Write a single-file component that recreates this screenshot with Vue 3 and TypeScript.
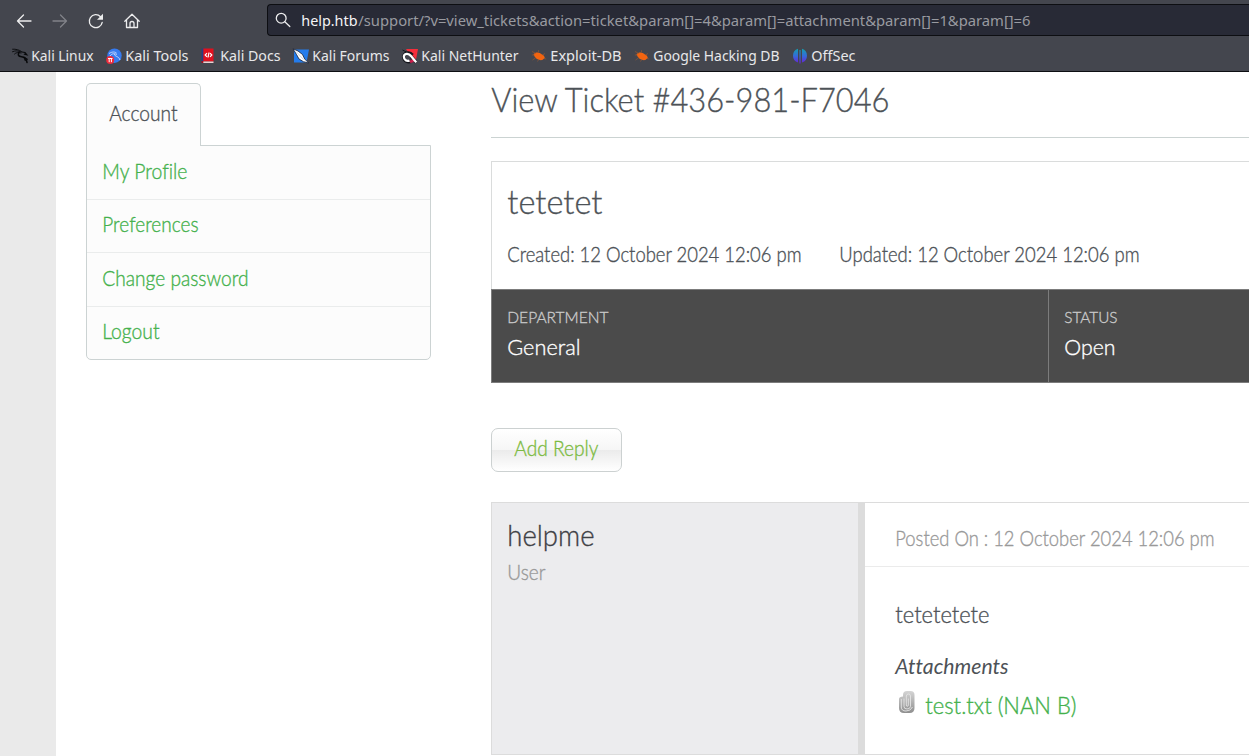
<script setup lang="ts">
import { h, type FunctionalComponent } from 'vue'

interface FitProps {
  text: string
  width: number
  size: number
}

// One line of text set to a fixed measure; its baseline sits `size` below the top.
const Fit: FunctionalComponent<FitProps> = (props) =>
  h('svg', { width: props.width, height: Math.round(props.size * 1.3) }, [
    h(
      'text',
      {
        x: 0.3,
        y: props.size,
        'font-size': props.size,
        fill: 'currentColor',
        textLength: props.width - 0.8,
        lengthAdjust: 'spacingAndGlyphs',
      },
      props.text,
    ),
  ])
Fit.props = ['text', 'width', 'size']

const bookmarks = [
  { icon: 'linux', label: 'Kali Linux', width: 63, cell: 94 },
  { icon: 'tools', label: 'Kali Tools', width: 64, cell: 95 },
  { icon: 'docs', label: 'Kali Docs', width: 61, cell: 92 },
  { icon: 'forums', label: 'Kali Forums', width: 78, cell: 109 },
  { icon: 'hunter', label: 'Kali NetHunter', width: 98, cell: 129 },
  { icon: 'bug', label: 'Exploit-DB', width: 72, cell: 103 },
  { icon: 'bug', label: 'Google Hacking DB', width: 127, cell: 158 },
  { icon: 'offsec', label: 'OffSec', width: 45, cell: 70 },
]

const menu = [
  { label: 'My Profile', width: 86 },
  { label: 'Preferences', width: 97 },
  { label: 'Change password', width: 147 },
  { label: 'Logout', width: 58 },
]
</script>

<template>
  <div class="window">
    <header class="chrome">
      <div class="toolbar">
        <nav class="nav">
          <svg width="16" height="16" viewBox="0 0 16 16"><path d="M15 8H1.500M7.500 2L1.500 8l6 6" /></svg>
          <svg class="dim" width="16" height="16" viewBox="0 0 16 16"><path d="M1 8h13.500M8.500 2l6 6-6 6" /></svg>
          <svg width="16" height="16" viewBox="0 0 16 16">
            <path d="M14.200 9.300A6.500 6.500 0 1 1 12.500 3.700" />
            <path class="solid" d="M15 .8v6H9z" />
          </svg>
          <svg width="16" height="16" viewBox="0 0 16 16">
            <path d="M.8 8.300L8 1.200l7.200 7.100M2.500 7v7.500h11V7M6 14.500v-4a2 2 0 0 1 4 0v4" />
          </svg>
        </nav>
        <div class="urlbar">
          <svg class="lens" width="16" height="16" viewBox="0 0 16 16"><circle cx="6.200" cy="6.200" r="4.900" /><path d="M9.800 9.800l5 4.700" /></svg>
          <Fit class="host" text="help.htb" :width="57" :size="15" />
          <Fit class="path" text="/support/?v=view_tickets&amp;action=ticket&amp;param[]=4&amp;param[]=attachment&amp;param[]=1&amp;param[]=6" :width="673" :size="15" />
        </div>
      </div>
      <div class="bookmarks">
        <div v-for="b in bookmarks" :key="b.label" class="bookmark" :style="{ width: b.cell + 'px' }">
          <svg class="favicon" width="16" height="16" viewBox="0 0 16 16">
            <g v-if="b.icon === 'linux'" fill="none" stroke="#08090b" stroke-linecap="round">
              <path d="M.6 1.200C4 1 7 1.800 9.500 3.500M.5 3.700C4 2.300 6 2.700 9 4M2.500 6C4 4.300 7 4 9 5" stroke-width=".9" />
              <path d="M7 4.500C5.500 7 6.500 8.500 9.500 8.700c3.500.2 5 1.800 5.500 5.800" stroke-width="1.600" />
              <path d="M10 4l3 .5 1.800 2.300-2.500-.7M12 9.300l3.300 2M12.500 10.500l.8 2" stroke-width="1.200" />
            </g>
            <g v-else-if="b.icon === 'tools'">
              <circle cx="8.500" cy="7.700" r="7.200" fill="#367bf0" />
              <path d="M3 5.500c4-2.300 6-1.500 7.500-.5M4 8c2-3 5-2.500 7-1.500M8.500 6c0 3 4 1.500 5.500 6" fill="none" stroke="#dfeaff" stroke-width=".8" />
              <circle cx="4.200" cy="12" r="4" fill="#ed2b3b" />
              <path d="M2 10.500h4.500M3.200 10.500v3.700M5.400 10.500v3.700" stroke="#fff" fill="none" />
            </g>
            <g v-else-if="b.icon === 'docs'">
              <path d="M.5.5h2.800v13H.5z" fill="#263e83" />
              <path d="M2.300.5h10.200v13H2.300z" fill="#e0101e" />
              <path d="M1.500 13.500h11V15h-11z" fill="#e9d3d3" /><path d="M.5 13h1.800v2H.5z" fill="#a00d1d" />
              <path d="M6 5.200L4.200 7 6 8.800M9 5.200L10.800 7 9 8.800M8 4.500L7 9.500" fill="none" stroke="#fff" stroke-width="1.200" />
            </g>
            <g v-else-if="b.icon === 'forums'">
              <path d="M1 1.500h15l-2.500 13H1z" fill="#247cec" />
              <path d="M0 .8l5 2.200 4.500 3.500 2.200 4.500 4 4-5.200-1.300-4.500-2.700-2.500-4.500z" fill="#fff" stroke="#182033" stroke-width=".8" />
              <path d="M3 3.500l7.500 8" stroke="#a5b8d3" stroke-width=".6" />
            </g>
            <g v-else-if="b.icon === 'hunter'">
              <path d="M4 1h12l-2.500 13.500z" fill="#f52e3b" />
              <path d="M.5 2l4 2" stroke="#15161b" />
              <path d="M14 14L9 8.500M10.500 7C7 3 1.800 5.500 1.800 9c0 4 4.500 6 7.500 4" fill="none" stroke="#16171d" stroke-width="3.400" />
              <path d="M8 14l4-2" stroke="#c71f4c" stroke-width="3" />
              <path d="M14.200 14.200L9 8C6.500 4.500 1.900 5.500 1.900 8.800c0 3.200 3 5 5.600 3.700" fill="none" stroke="#fff" stroke-width="2.300" />
            </g>
            <g v-else-if="b.icon === 'bug'">
              <path d="M2.500 6.200c2-2.500 6-2.400 8.500.3 1.500.4 2.500 1.800 2.800 3.400l-2.500 2.100c-3 .8-7.500-1.500-8.800-5.800z" fill="#f36410" />
              <path d="M1 3.500l4 2M.8 7h3M7.500 4.500V2.200M4.500 10l-3 2M8 11l-1.500 2.500M11.500 7L14 5.500M13 10.500l2.200.5" fill="none" stroke="#a0592f" stroke-width=".6" />
            </g>
            <g v-else>
              <defs><linearGradient id="offsec" x1="0" y1="0" x2="0" y2="1"><stop offset="0" stop-color="#139fae" /><stop offset=".5" stop-color="#3669da" /><stop offset="1" stop-color="#6a20d6" /></linearGradient></defs>
              <path d="M6 .8V14.500A7.200 7.200 0 0 1 6 .8zM10 .8a7.200 7.200 0 0 1 0 13.700zM7.400 2h1.200v13.500H7.400z" fill="url(#offsec)" />
            </g>
          </svg>
          <Fit :text="b.label" :width="b.width" :size="15" />
        </div>
      </div>
    </header>

    <div class="page">
      <aside class="sidebar">
        <div class="tab"><Fit text="Account" :width="69" :size="21" /></div>
        <ul class="menu">
          <li v-for="m in menu" :key="m.label"><Fit :text="m.label" :width="m.width" :size="21" /></li>
        </ul>
      </aside>

      <main class="main">
        <h1 class="title"><Fit text="View Ticket #436-981-F7046" :width="399" :size="33" /></h1>

        <section class="ticket">
          <Fit class="subject" text="tetetet" :width="96" :size="34" />
          <div class="dates">
            <Fit text="Created: 12 October 2024 12:06 pm" :width="295" :size="21" />
            <Fit text="Updated: 12 October 2024 12:06 pm" :width="301" :size="21" />
          </div>
        </section>
        <section class="facts">
          <div class="fact dept">
            <Fit class="key" text="DEPARTMENT" :width="102" :size="16" />
            <Fit text="General" :width="74" :size="22" />
          </div>
          <div class="fact">
            <Fit class="key" text="STATUS" :width="54" :size="16" />
            <Fit text="Open" :width="52" :size="22" />
          </div>
        </section>

        <button class="reply" type="button"><Fit text="Add Reply" :width="85" :size="21" /></button>

        <article class="post">
          <div class="author">
            <Fit class="name" text="helpme" :width="88" :size="29" />
            <Fit class="role" text="User" :width="39" :size="21" />
          </div>
          <div class="body">
            <div class="posted"><Fit text="Posted On : 12 October 2024 12:06 pm" :width="320" :size="21" /></div>
            <Fit class="message" text="tetetetete" :width="95" :size="23" />
            <Fit class="heading" text="Attachments" :width="114" :size="21" />
            <div class="file">
              <svg class="clip" width="18" height="25" viewBox="0 0 18 25">
                <defs><linearGradient id="clip" x1="0" y1="0" x2="0" y2="1"><stop offset="0" stop-color="#d5d5d5" /><stop offset="1" stop-color="#8f8f8f" /></linearGradient></defs>
                <path d="M6 6.500V5q0-4 4-4h3.500q4 0 4 4v13q0 5-5 5H7q-5 0-5-5V9q0-2.500 4-2.500z" fill="url(#clip)" />
                <path d="M7 8.500v8q0 2.500 3 2.500t3.500-2.500V6q0-2-2-2T9.300 6v9q0 1.300 1 1.300t1-1.300V8.500M4.300 9v8q0 4 4.700 4t6.500-4" fill="none" stroke="#e4e4e4" stroke-width=".9" />
              </svg>
              <Fit text="test.txt (NAN B)" :width="152" :size="23" />
            </div>
          </div>
        </article>
      </main>
    </div>
  </div>
</template>

<style>
body { margin: 0; background: #fff; }
</style>

<style scoped>
.window { width: 1249px; height: 756px; overflow: hidden; font-family: Lato, "Open Sans", sans-serif; font-weight: 300; color: #4d5257; }
svg { display: block; flex: none; overflow: visible; }

.chrome { box-sizing: border-box; height: 72px; background: #44464e; border-bottom: 1px solid #0d0e12; color: #e8e8ea; font-family: "Noto Sans", sans-serif; font-weight: 400; }
.toolbar { display: flex; height: 41px; }
.nav { display: flex; gap: 20px; width: 267px; padding: 13px 0 0 16px; box-sizing: border-box; }
.nav svg, .lens { fill: none; stroke: #ededee; stroke-width: 1.3; stroke-linecap: round; stroke-linejoin: round; }
.nav .dim { stroke: #818289; }
.nav .solid { fill: #ededee; stroke: none; }
.urlbar { box-sizing: border-box; display: flex; flex: 1; height: 32px; margin-top: 4px; padding: 6px 0 0 7px; background: #282a36; border: 1px solid #0d0e12; border-right: 0; border-radius: 4px 0 0 4px; }
.lens { margin: 1px 10px 0 0; }
.host { color: #f5f5f6; }
.path { color: #999aa0; }
.bookmarks { display: flex; padding-left: 12px; }
.bookmark { display: flex; flex: none; gap: 3px; padding-top: 5px; }
.favicon { margin-top: 2px; }

.page { display: flex; height: 684px; box-sizing: border-box; border-left: 56px solid #eaeaea; font-variant-ligatures: none; }
.page :deep(text) { stroke: currentColor; stroke-width: 0.35px; }
.sidebar { width: 345px; margin: 11px 60px 0 30px; flex: none; }
.tab { position: relative; box-sizing: border-box; width: 115px; height: 63px; margin-bottom: -1px; padding: 16px 0 0 22px; background: #fcfcfc; border: 1px solid #ccd3d3; border-bottom: 0; border-radius: 5px 5px 0 0; }
.menu { box-sizing: border-box; height: 215px; display: grid; grid-template-rows: 54px 53px 54px 52px; margin: 0; padding: 0; list-style: none; background: #fcfcfc; border: 1px solid #ccd3d3; border-radius: 0 0 5px 5px; color: #44b14c; }
.menu li { box-sizing: border-box; padding: 12px 0 0 15px; border-bottom: 1px solid #eaecec; }
.menu li:nth-child(even) { padding-top: 11px; }
.menu li:last-child { border-bottom: 0; }

.main { flex: 1; min-width: 0; }
.title { box-sizing: border-box; height: 66px; margin: 0; padding-top: 7px; border-bottom: 1px solid #cbd3d2; font-weight: inherit; }
.ticket { box-sizing: border-box; height: 128px; margin-top: 23px; padding: 18px 0 0 15px; border: 1px solid #dadcdc; border-width: 1px 0 0 1px; }
.dates { display: flex; gap: 37px; margin-top: 17px; }
.facts { box-sizing: border-box; display: flex; height: 94px; background: #4b4b4b; border: 1px solid #7c7c7c; border-right: 0; color: #fff; }
.fact { padding: 17px 0 0 15px; }
.dept { width: 541px; border-right: 1px solid #7c7c7c; }
.key { margin-bottom: 5px; color: #c9c9c9; }
.reply { display: block; box-sizing: border-box; width: 131px; height: 44px; margin: 45px 0 30px; padding: 0 0 4px 22px; background: linear-gradient(#fff 0%, #f6f6f6 50%, #ebebeb 50%, #fff 100%); border: 1px solid #ccd1d1; border-radius: 7px; color: #7dbb42; font: inherit; }
.post { box-sizing: border-box; display: flex; height: 253px; border: 1px solid #dcdcdc; border-right: 0; }
.author { box-sizing: border-box; width: 373px; padding: 14px 0 0 15px; background: #ececee; border-right: 7px solid #dcdcdc; }
.name { color: #3e4045; }
.role { margin-top: 4px; color: #999; }
.body { flex: 1; min-width: 0; }
.posted { box-sizing: border-box; height: 64px; padding: 22px 0 0 30px; border-bottom: 1px solid #ebebeb; color: #999; }
.message { margin: 33px 0 0 30px; }
.heading { margin: 23px 0 0 30px; font-style: italic; font-weight: 400; }
.page .heading :deep(text), .page .heading.heading { stroke-width: 0; }
.file { display: flex; gap: 10px; margin: 11px 0 0 32px; color: #44b14c; }
.clip { margin: -1px 0 0 0; }
</style>
